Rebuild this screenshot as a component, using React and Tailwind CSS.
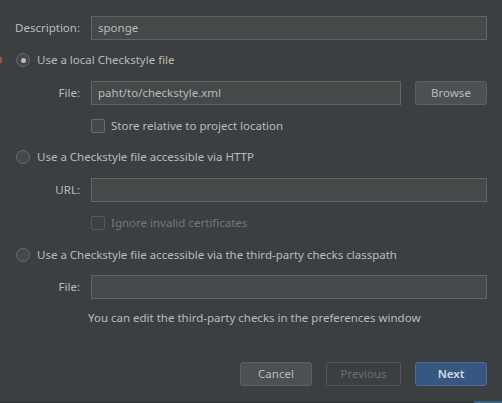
import React from "react";

function Radio({ checked }) {
  return (
    <span className="flex h-[14px] w-[14px] shrink-0 items-center justify-center rounded-full border border-[#6b6b6b] bg-[#43494a]">
      {checked && <span className="h-[5px] w-[5px] rounded-full bg-[#bbbbbb]" />}
    </span>
  );
}

function Checkbox({ disabled }) {
  return (
    <span
      className={`h-[14px] w-[14px] shrink-0 rounded-[2px] border ${
        disabled ? "border-[#565a5b] bg-[#3c3f41]" : "border-[#6b6b6b] bg-[#43494a]"
      }`}
    />
  );
}

function Field({ label, value, className = "" }) {
  return (
    <div className={`flex items-center ${className}`}>
      <span className="w-[65px] whitespace-nowrap text-right">{label}</span>
      <div className="ml-[11px] flex h-[24px] flex-1 items-center border border-[#646464] bg-[#45494a] px-[6px]">
        {value}
      </div>
    </div>
  );
}

export default function App() {
  return (
    <div
      className="relative h-[403px] w-[502px] overflow-hidden bg-[#3c3f41] text-[11.5px] text-[#bbbbbb]"
      style={{ fontFamily: '"Noto Sans", "Open Sans", sans-serif' }}
    >
      <div className="absolute left-0 top-[57px] h-[6px] w-[2px] bg-[#a0523e]" />
      <div className="flex flex-col px-[15px] pt-[16px]">
        <Field label="Description:" value="sponge" />

        <label className="mt-[13px] flex h-[14px] items-center gap-[7px] pl-[1px]">
          <Radio checked />
          <span>Use a local Checkstyle file</span>
        </label>

        <div className="mt-[14px] flex items-center">
          <span className="w-[65px] text-right">File:</span>
          <div className="ml-[11px] flex h-[24px] flex-1 items-center border border-[#646464] bg-[#45494a] px-[6px]">
            paht/to/checkstyle.xml
          </div>
          <button className="ml-[14px] h-[24px] w-[72px] rounded-[3px] border border-[#5e6060] bg-[#4c5052] text-[#bbbbbb]">
            Browse
          </button>
        </div>

        <label className="mt-[14px] ml-[76px] flex h-[14px] items-center gap-[6px]">
          <Checkbox />
          <span>Store relative to project location</span>
        </label>

        <label className="mt-[17px] flex h-[14px] items-center gap-[7px] pl-[1px]">
          <Radio />
          <span>Use a Checkstyle file accessible via HTTP</span>
        </label>

        <Field label="URL:" value="" className="mt-[14px]" />

        <label className="mt-[14px] ml-[76px] flex h-[14px] items-center gap-[6px] text-[#777777]">
          <Checkbox disabled />
          <span>Ignore invalid certificates</span>
        </label>

        <label className="mt-[18px] flex h-[14px] items-center gap-[7px] pl-[1px]">
          <Radio />
          <span>Use a Checkstyle file accessible via the third-party checks classpath</span>
        </label>

        <Field label="File:" value="" className="mt-[13px]" />

        <p className="mt-[10px] ml-[73px] whitespace-nowrap leading-[18px]">
          You can edit the third-party checks in the preferences window
        </p>

        <div className="mt-[35px] flex justify-end gap-[14px]">
          <button className="h-[24px] w-[72px] rounded-[3px] border border-[#5e6060] bg-[#4c5052] text-[#bbbbbb]">
            Cancel
          </button>
          <button className="h-[24px] w-[75px] rounded-[3px] border border-[#555859] bg-[#3c3f41] text-[#6e6e6e]">
            Previous
          </button>
          <button className="h-[24px] w-[72px] rounded-[3px] border border-[#4c6e94] bg-[#365880] font-semibold text-[#d4dbe3]">
            Next
          </button>
        </div>
      </div>
      <div className="absolute bottom-0 left-0 h-[2px] w-full bg-[#333638]" />
      <div className="absolute bottom-0 right-0 h-[2px] w-[28px] bg-[#3d6185]" />
    </div>
  );
}
